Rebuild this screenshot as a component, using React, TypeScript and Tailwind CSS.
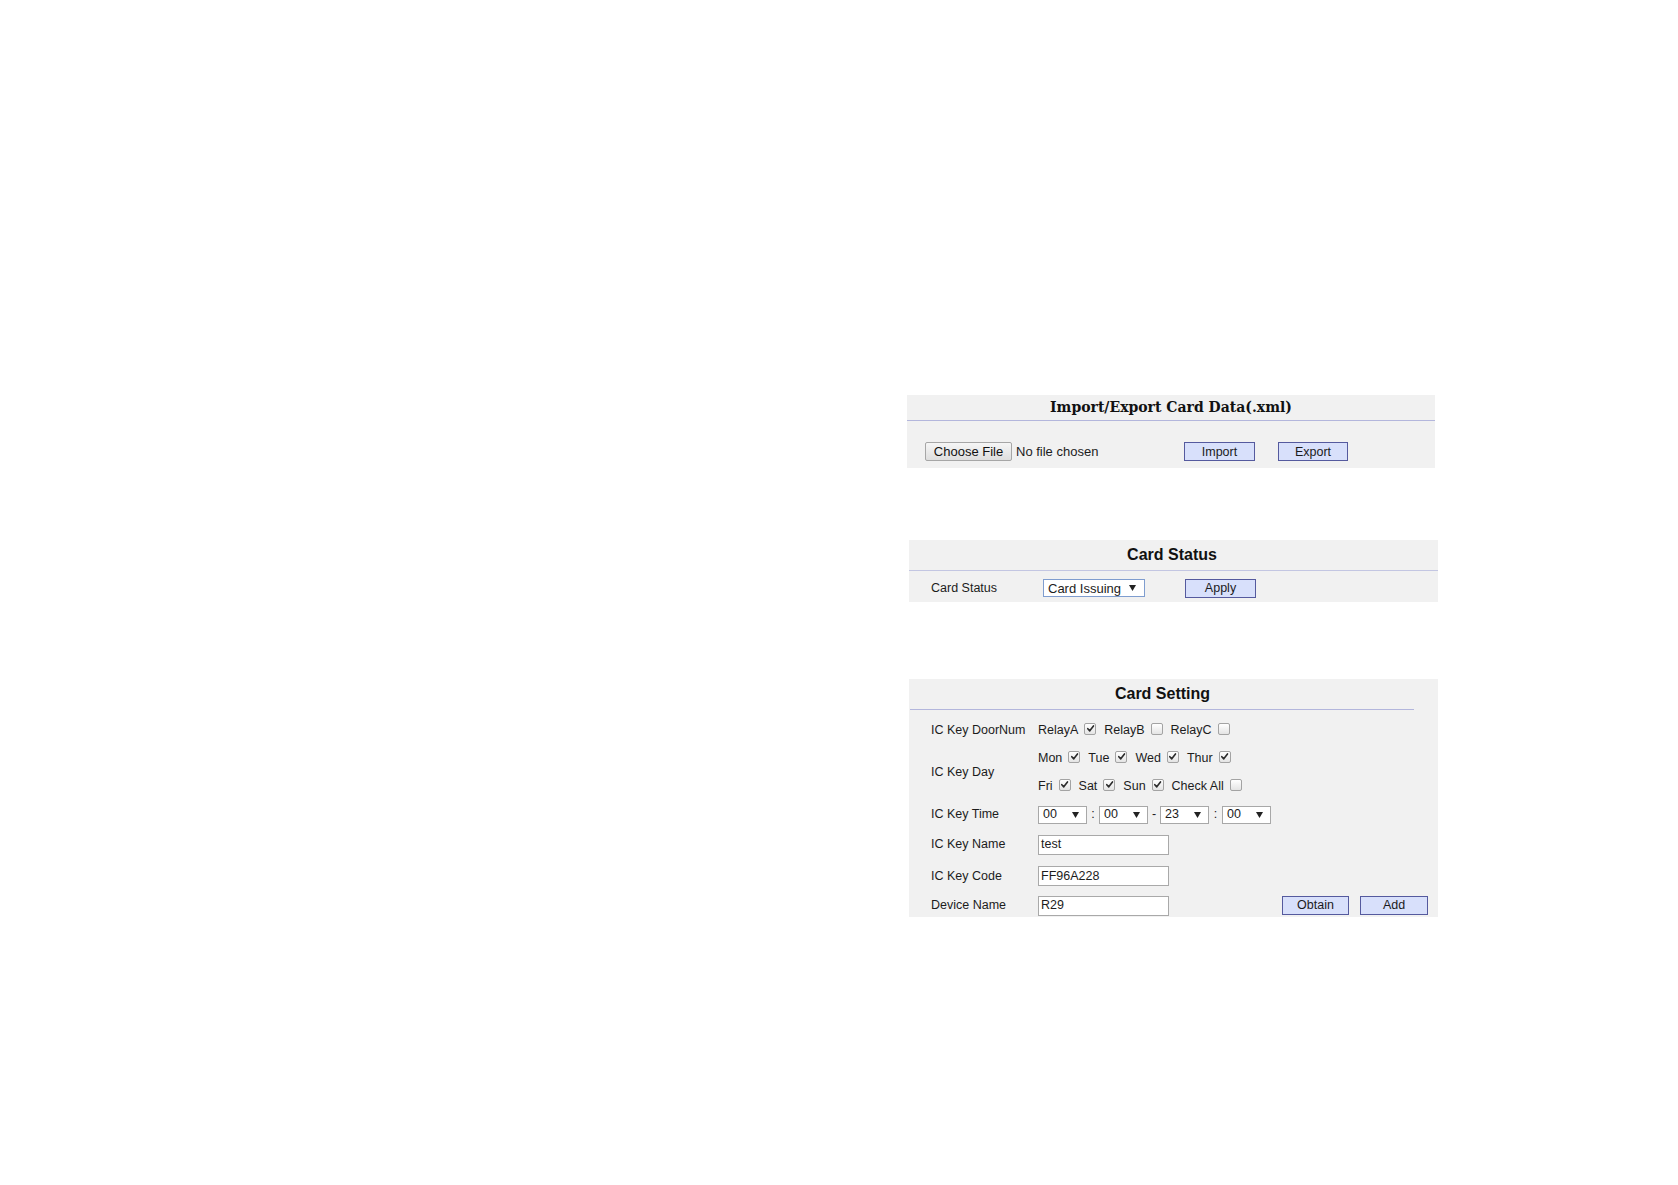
import React from 'react';

// small arrow used by the fake select boxes
function Arrow() {
    return (
        <svg width="7" height="6" viewBox="0 0 7 6" className="shrink-0">
            <polygon points="0,0 7,0 3.5,6" fill="#222" />
        </svg>
    );
}

function Check({ checked }: { checked?: boolean }) {
    return (
        <span className="relative -top-[2px] inline-flex h-[12px] w-[12px] shrink-0 items-center justify-center rounded-[2px] border border-[#a3a3a3] bg-gradient-to-b from-white to-[#e4e4e4]">
            {checked && (
                <svg width="9" height="9" viewBox="0 0 10 10">
                    <path d="M2 5.2 L4.2 7.6 L8.3 2.2" fill="none" stroke="#2b2b2b" strokeWidth="1.8" strokeLinecap="round" strokeLinejoin="round" />
                </svg>
            )}
        </span>
    );
}

function BlueButton({ label, className = '' }: { label: string; className?: string }) {
    return (
        <button className={`flex h-[19px] items-center justify-center border border-[#555a9e] bg-[#d8e0fb] text-[12.5px] leading-none text-[#1b1b1b] ${className}`}>
            {label}
        </button>
    );
}

function TimeSelect({ value }: { value: string }) {
    return (
        <div className="flex h-[18px] w-[49px] items-center justify-between border border-[#a8a8a8] bg-white pl-[4px] pr-[7px] text-[12.5px] leading-none">
            <span>{value}</span>
            <Arrow />
        </div>
    );
}

function TextBox({ value }: { value: string }) {
    return (
        <div className="flex h-[20px] w-[131px] items-center border border-[#a9a9a9] bg-white pl-[2px] text-[12.5px] leading-none">
            {value}
        </div>
    );
}

function CheckItem({ label, checked }: { label: string; checked?: boolean }) {
    return (
        <span className="mr-[8px] inline-flex items-center">
            <span className="mr-[6px]">{label}</span>
            <Check checked={checked} />
        </span>
    );
}

export default function App() {
    return (
        <div className="min-h-screen w-full bg-white font-['Liberation_Sans',Arial,sans-serif] text-[#1c1c1c]">
            <div className="pl-[907px] pt-[395px]">
                {/* Import / Export */}
                <section className="w-[528px] bg-[#f1f1f1]">
                    <div className="flex h-[26px] items-center justify-center border-b border-[#b3b6dc] font-['DejaVu_Serif',serif] text-[14px] font-bold text-[#111]">
                        Import/Export Card Data(.xml)
                    </div>
                    <div className="flex items-center pb-[6px] pl-[18px] pt-[21px]">
                        <div className="flex w-[259px] items-center text-[13px]">
                            <button className="flex h-[19px] w-[87px] items-center justify-center rounded-[2px] border border-[#a6a6a6] bg-gradient-to-b from-[#f6f6f6] to-[#dedede] leading-none text-[#111]">
                                Choose File
                            </button>
                            <span className="ml-[4px]">No file chosen</span>
                        </div>
                        <BlueButton label="Import" className="w-[71px]" />
                        <BlueButton label="Export" className="ml-[23px] w-[70px]" />
                    </div>
                </section>

                {/* Card Status */}
                <section className="ml-[2px] mt-[72px] w-[529px] bg-[#f1f1f1]">
                    <div className="flex h-[31px] items-center justify-center border-b border-[#c3c6e2] text-[16px] font-bold text-[#111]">
                        <span className="-ml-[3px]">Card Status</span>
                    </div>
                    <div className="flex items-center pb-[4px] pl-[22px] pt-[8px] text-[12.5px]">
                        <span className="w-[112px]">Card Status</span>
                        <div className="flex h-[18px] w-[102px] items-center justify-between border border-[#7f9dcf] bg-white pl-[4px] pr-[8px] text-[13px] leading-none">
                            <span>Card Issuing</span>
                            <Arrow />
                        </div>
                        <BlueButton label="Apply" className="ml-[40px] h-[18px] w-[71px]" />
                    </div>
                </section>

                {/* Card Setting */}
                <section className="ml-[2px] mt-[77px] w-[529px] bg-[#f1f1f1] pb-[1px]">
                    <div className="flex h-[30px] items-center justify-center text-[16px] font-bold text-[#111]">
                        <span className="-ml-[22px]">Card Setting</span>
                    </div>
                    <div className="ml-[1px] h-px w-[504px] bg-[#b3b6dc]" />
                    <div className="grid grid-cols-[107px_1fr] grid-rows-[28px_28px_28px_28px_32px_31px_24px] pl-[22px] pt-[7px] text-[12.5px]">
                        <div className="flex items-center">IC Key DoorNum</div>
                        <div className="flex items-center">
                            <CheckItem label="RelayA" checked />
                            <CheckItem label="RelayB" />
                            <CheckItem label="RelayC" />
                        </div>

                        <div className="row-span-2 flex items-center">IC Key Day</div>
                        <div className="flex items-center">
                            <CheckItem label="Mon" checked />
                            <CheckItem label="Tue" checked />
                            <CheckItem label="Wed" checked />
                            <CheckItem label="Thur" checked />
                        </div>
                        <div className="flex items-center">
                            <CheckItem label="Fri" checked />
                            <CheckItem label="Sat" checked />
                            <CheckItem label="Sun" checked />
                            <CheckItem label="Check All" />
                        </div>

                        <div className="flex items-center">IC Key Time</div>
                        <div className="flex items-center">
                            <TimeSelect value="00" />
                            <span className="w-[12px] text-center">:</span>
                            <TimeSelect value="00" />
                            <span className="w-[12px] text-center">-</span>
                            <TimeSelect value="23" />
                            <span className="w-[13px] text-center">:</span>
                            <TimeSelect value="00" />
                        </div>

                        <div className="flex items-center">IC Key Name</div>
                        <div className="flex items-center">
                            <TextBox value="test" />
                        </div>

                        <div className="flex items-center">IC Key Code</div>
                        <div className="flex items-center">
                            <TextBox value="FF96A228" />
                        </div>

                        <div className="flex items-end">
                            <span className="flex h-[20px] items-center">Device Name</span>
                        </div>
                        <div className="flex items-end">
                            <TextBox value="R29" />
                            <BlueButton label="Obtain" className="mb-[1px] ml-[113px] w-[67px]" />
                            <BlueButton label="Add" className="mb-[1px] ml-[11px] w-[68px]" />
                        </div>
                    </div>
                </section>
            </div>
        </div>
    );
}
